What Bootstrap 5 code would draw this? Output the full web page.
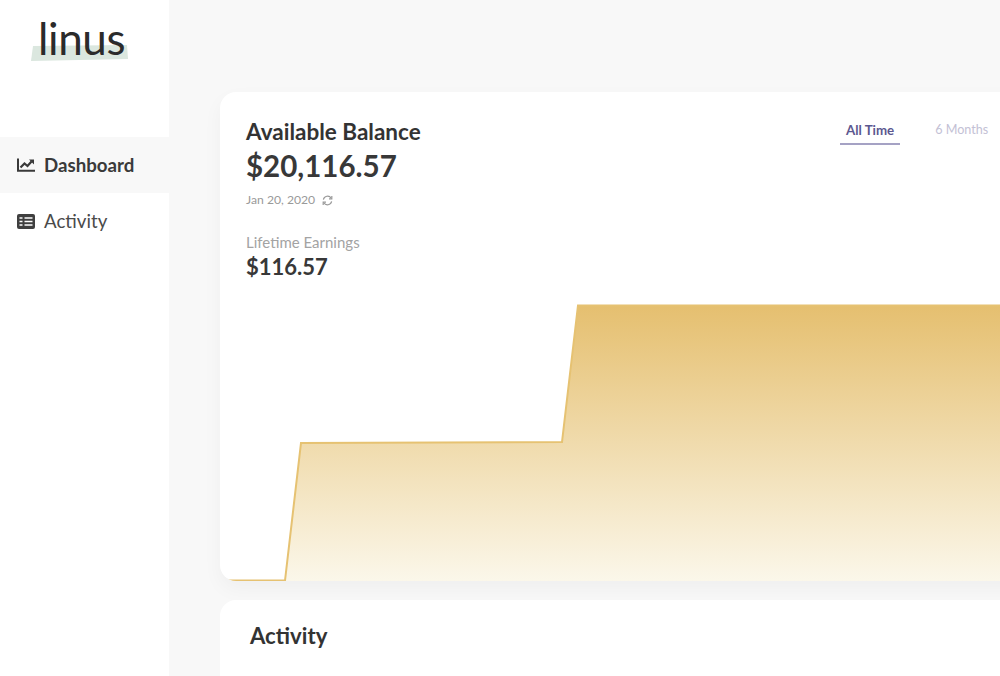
<!DOCTYPE html>
<html lang="en">

<head>
    <meta charset="UTF-8" />
    <meta name="viewport" content="width=device-width, initial-scale=1.0" />
    <title>Linus Dashboard</title>
    <link href="https://cdn.jsdelivr.net/npm/bootstrap@5.3.0/dist/css/bootstrap.min.css" rel="stylesheet" />
    <style>
        html, body { height: 676px; overflow: hidden; }
        body { font-family: Lato, "Liberation Sans", sans-serif; background: #f8f8f8; color: #333; }
        .app-shell { height: 676px; overflow: hidden; }
        .side-bar { width: 169px; background: #fff; flex: none; }
        .brand-box { height: 137px; padding: 13px 0 0 38px; }
        .brand-word { position: relative; display: inline-block; font-size: 44px; font-weight: 400; line-height: 50px; color: #2b2b2b; letter-spacing: -.4px; }
        .brand-word span { position: relative; }
        .brand-word svg { position: absolute; left: -8px; top: 31px; }
        .side-link { height: 56px; padding-left: 17px; gap: 9px; font-size: 18.7px; color: #4a4a4a; text-decoration: none; }
        .side-link.on { background: #f8f8f8; font-weight: 700; color: #3a3a3a; }
        .main-area { padding: 92px 0 0 51px; flex: none; width: 831px; }
        .money-card, .list-card { width: 900px; background: #fff; border: 0; border-radius: 16px; overflow: hidden; flex: none; }
        .money-card { height: 489px; box-shadow: 0 8px 20px rgba(0, 0, 0, .04); }
        .list-card { height: 120px; margin-top: 19px; padding: 21px 30px; }
        .top-part { height: 212px; padding: 26px 0 0 26px; }
        .bal-title { font-size: 22.5px; font-weight: 700; line-height: 28px; color: #333; margin: 0; }
        .bal-num { font-size: 29.5px; font-weight: 700; line-height: 40px; color: #383838; }
        .bal-date { font-size: 12.2px; line-height: 16px; margin-top: 6px; color: #9a9a9a; gap: 7px; }
        .life-label { font-size: 15px; line-height: 18px; margin-top: 25px; color: #a3a3a3; }
        .life-num { font-size: 22px; font-weight: 700; line-height: 30px; margin-top: 1px; color: #383838; }
        .range-tabs { position: absolute; top: 29px; left: 620px; gap: 29px; font-size: 13px; line-height: 18px; }
        .range-tabs div { padding: 0 6px 4px; color: #c3c1d5; font-size: 12.6px; }
        .range-tabs .on { color: #5c5890; font-size: 13.3px; font-weight: 700; border-bottom: 2px solid #a5a2c4; }
        .chart-svg { display: block; }
        .list-title { font-size: 22.2px; font-weight: 700; line-height: 30px; color: #333; margin: 0; }
    </style>
</head>

<body>
    <div class="app-shell d-flex">
        <div class="side-bar">
            <div class="brand-box">
                <div class="brand-word">
                    <svg width="98" height="20" viewBox="0 0 98 20"><path d="M3 2 L97 1 L98 15 L1 17 Z" fill="#dbe7df" /></svg>
                    <span>linus</span>
                </div>
            </div>
            <a class="side-link on d-flex align-items-center" href="#">
                <svg width="18" height="14" viewBox="0 0 18 14"><path d="M1 0.5 V12.7 H18" fill="none" stroke="#3a3a3a" stroke-width="2" /><path d="M3.5 9.5 L7.5 5.5 L10.5 8 L14.5 3.5" fill="none" stroke="#3a3a3a" stroke-width="2.2" /><path d="M12 1.5 H17 V6.5 Z" fill="#3a3a3a" /></svg>
                <span>Dashboard</span>
            </a>
            <a class="side-link d-flex align-items-center" href="#">
                <svg width="18" height="15" viewBox="0 0 18 15"><rect width="18" height="15" rx="2" fill="#3f3f3f" /><path d="M2.5 4 H5.5 M7.5 4 H15.5 M2.5 7.5 H5.5 M7.5 7.5 H15.5 M2.5 11 H5.5 M7.5 11 H15.5" stroke="#fff" stroke-width="1.6" /></svg>
                <span>Activity</span>
            </a>
        </div>

        <div class="main-area">
            <div class="card money-card position-relative">
                <div class="top-part">
                    <h5 class="bal-title">Available Balance</h5>
                    <div class="bal-num">$20,116.57</div>
                    <div class="bal-date d-flex align-items-center">
                        <span>Jan 20, 2020</span>
                        <svg width="11" height="11" viewBox="0 0 12 12" fill="none" stroke="#9a9a9a" stroke-width="1.3"><path d="M1.5 5 A4.6 4.6 0 0 1 10 3.6" /><path d="M10.5 7 A4.6 4.6 0 0 1 2 8.4" /><path d="M10.7 1 V4.2 H7.6 M1.3 11 V7.8 H4.4" /></svg>
                    </div>
                    <div class="life-label">Lifetime Earnings</div>
                    <div class="life-num">$116.57</div>
                </div>
                <div class="range-tabs d-flex">
                    <div class="on">All Time</div>
                    <div>6 Months</div>
                </div>
                <svg class="chart-svg" width="900" height="277" viewBox="0 0 900 277">
                    <defs>
                        <linearGradient id="goldFill" x1="0" y1="0" x2="0" y2="1">
                            <stop offset="0" stop-color="#e5bf6f" />
                            <stop offset="1" stop-color="#fbf7ea" />
                        </linearGradient>
                    </defs>
                    <path d="M65 277 L81 139 L342 138 L358 1 H900 V277 Z" fill="url(#goldFill)" />
                    <path d="M0 276.5 H65 L81 139 L342 138 L358 1.5 H900" fill="none" stroke="#e6c272" stroke-width="2" />
                </svg>
            </div>
            <div class="card list-card">
                <h5 class="list-title">Activity</h5>
            </div>
        </div>
    </div>

    <script src="https://cdn.jsdelivr.net/npm/bootstrap@5.3.0/dist/js/bootstrap.bundle.min.js"></script>
</body>

</html>
